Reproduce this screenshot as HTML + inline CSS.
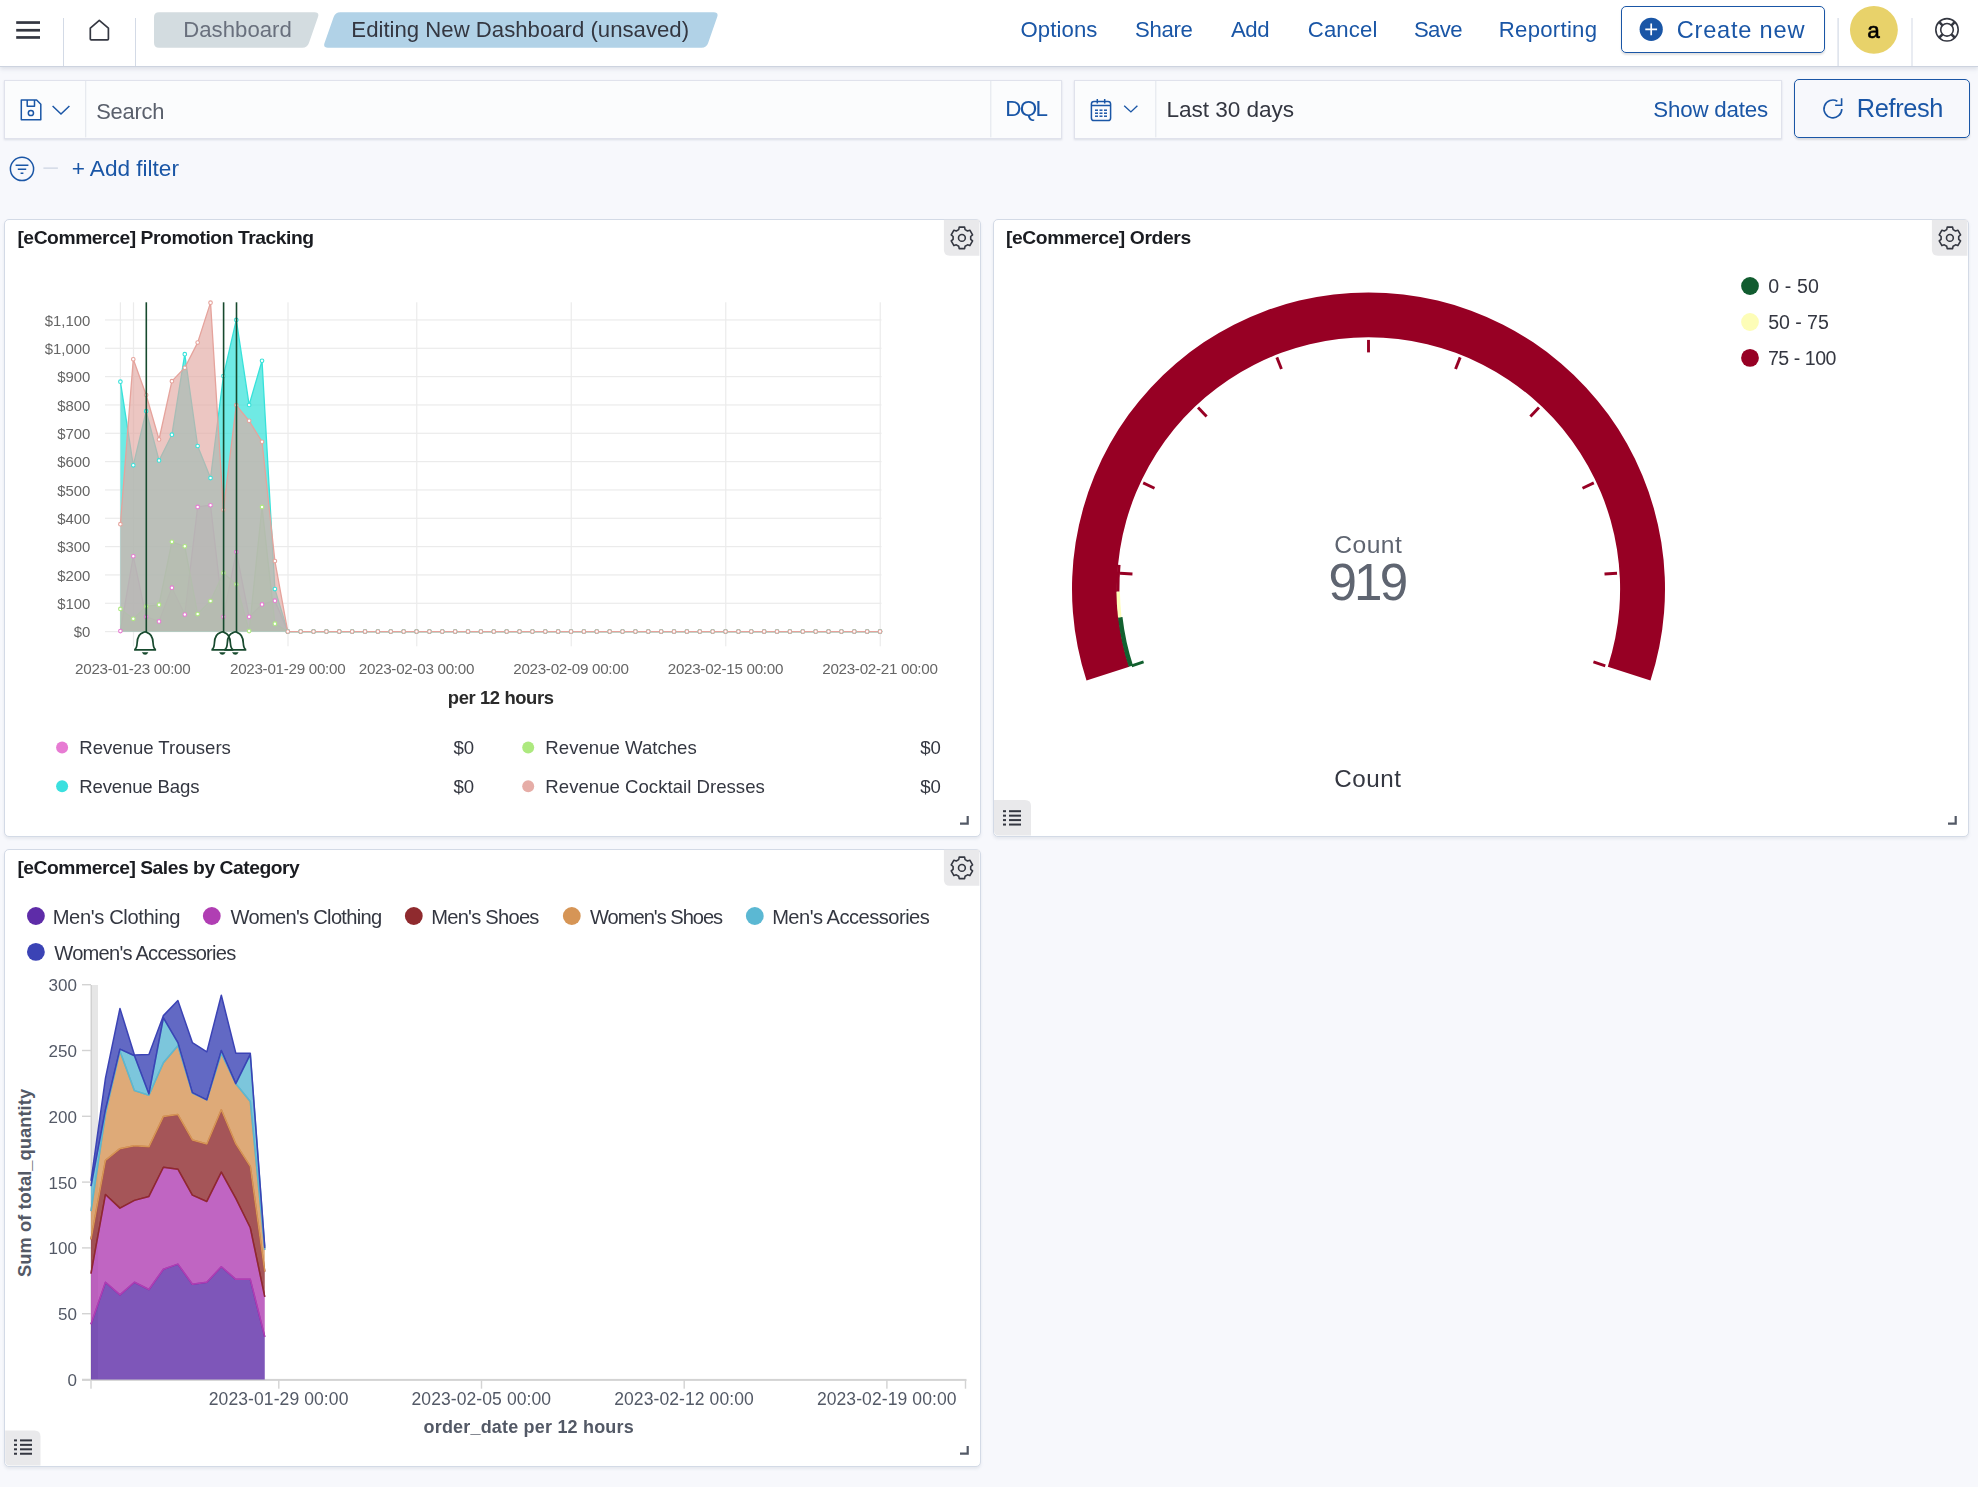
<!DOCTYPE html>
<html><head><meta charset="utf-8"><title>Dashboard</title>
<style>
html,body{margin:0;padding:0}
body{width:1978px;height:1487px;overflow:hidden;position:relative;background:#F7F8FC;font-family:"Liberation Sans", sans-serif}
.tx{position:absolute;left:0;top:0;width:1978px;height:1487px;will-change:transform}
.tx div{position:absolute;white-space:nowrap}
svg{position:absolute;left:0;top:0}
</style></head><body>
<div style="position:absolute;left:0;top:0;width:1978px;height:66px;background:#fff;border-bottom:1px solid #CDD3DF;box-shadow:0 2px 4px rgba(152,162,179,.28)"></div><div style="position:absolute;left:1621px;top:6.2px;width:202px;height:45.3px;border:1.2px solid #1A56A6;border-radius:5px;box-shadow:0 1.5px 2px rgba(0,0,0,.12)"></div><div style="position:absolute;left:4.2px;top:79.7px;width:1055.8px;height:57.4px;background:#FBFCFD;border:1px solid #E0E2EC;box-shadow:0 1px 2px rgba(152,162,179,.3)"></div><div style="position:absolute;left:1074.2px;top:79.7px;width:706.3px;height:57.4px;background:#FBFCFD;border:1px solid #E0E2EC;box-shadow:0 1px 2px rgba(152,162,179,.3)"></div><div style="position:absolute;left:1794.3px;top:79.2px;width:174.2px;height:57.2px;border:1.2px solid #1A56A6;border-radius:5px;box-shadow:0 1.5px 2px rgba(0,0,0,.12)"></div><div style="position:absolute;left:4.2px;top:219.3px;width:974.8px;height:616.2px;background:#fff;border:1px solid #D3DAE6;border-radius:5px;box-shadow:0 2px 3px rgba(152,162,179,.18)"></div><div style="position:absolute;left:993px;top:219.3px;width:974px;height:616.2px;background:#fff;border:1px solid #D3DAE6;border-radius:5px;box-shadow:0 2px 3px rgba(152,162,179,.18)"></div><div style="position:absolute;left:4.2px;top:849.3px;width:974.8px;height:616.2px;background:#fff;border:1px solid #D3DAE6;border-radius:5px;box-shadow:0 2px 3px rgba(152,162,179,.18)"></div><div style="position:absolute;left:15.6px;top:1276.8px;transform:rotate(-90deg);transform-origin:0 0;white-space:nowrap;font-family:Liberation Sans,sans-serif;font-weight:bold;font-size:18.3px;color:#535966;line-height:18.3px;letter-spacing:0.06px">Sum of total_quantity</div>
<svg width="1978" height="1487" viewBox="0 0 1978 1487">
<rect x="16.2" y="21.2" width="23.8" height="2.7" fill="#343741"/><rect x="16.2" y="28.9" width="23.8" height="2.7" fill="#343741"/><rect x="16.2" y="36.1" width="23.8" height="2.7" fill="#343741"/><rect x="63" y="18" width="1" height="48" fill="#D3DAE6"/><rect x="135" y="18" width="1" height="48" fill="#D3DAE6"/><rect x="1837.5" y="18" width="1.2" height="48" fill="#D3DAE6"/><rect x="1911.5" y="18" width="1" height="48" fill="#D3DAE6"/><path d="M90.3 28.2 L99.3 20.3 L108.4 28.2 L108.4 38.9 Q108.4 39.8 107.5 39.8 L91.2 39.8 Q90.3 39.8 90.3 38.9 Z" fill="none" stroke="#343741" stroke-width="1.7" stroke-linejoin="round"/><path d="M154.00 17.20 Q154.00 12.20 159.00 12.20 L314.60 12.20 Q319.60 12.20 317.97 16.93 L308.93 43.07 Q307.30 47.80 302.30 47.80 L159.00 47.80 Q154.00 47.80 154.00 42.80 Z" fill="#D3DCE0"/><path d="M333.66 16.92 Q335.30 12.20 340.30 12.20 L713.80 12.20 Q718.80 12.20 717.17 16.93 L708.13 43.07 Q706.50 47.80 701.50 47.80 L327.90 47.80 Q322.90 47.80 324.54 43.08 Z" fill="#B1D2E7"/><circle cx="1651.2" cy="29.3" r="11.6" fill="#1A56A6"/><path d="M1651.2 23.4 V35.2 M1645.3 29.3 H1657.1" stroke="#fff" stroke-width="1.7"/><circle cx="1873.9" cy="29.85" r="23.95" fill="#E8D26A"/><g fill="none" stroke="#343741"><circle cx="1947" cy="29.85" r="11.2" stroke-width="1.6"/><circle cx="1947" cy="29.85" r="6.3" stroke-width="1.6"/><path d="M1939.1 21.95 L1942.5 25.35 M1954.9 21.95 L1951.5 25.35 M1939.1 37.75 L1942.5 34.35 M1954.9 37.75 L1951.5 34.35" stroke-width="2.6"/></g><rect x="85.2" y="80.4" width="1" height="57" fill="#E1E5EC"/><rect x="990.3" y="80.4" width="1" height="57" fill="#E1E5EC"/><g fill="none" stroke="#1A56A6" stroke-width="1.5" stroke-linejoin="round"><path d="M21.3 100 H36.6 L40.8 104.3 V119.8 H21.3 Z"/><path d="M27.2 100 V106.3 H34.5 V100"/><circle cx="30.9" cy="113" r="2.6"/></g><path d="M52.6 106 L61 114 L69.4 106" fill="none" stroke="#1A56A6" stroke-width="1.5"/><rect x="1155.3" y="80.4" width="1" height="57" fill="#E1E5EC"/><g fill="none" stroke="#1A56A6" stroke-width="1.5"><rect x="1091.4" y="101.5" width="19.2" height="19" rx="2.6"/><path d="M1091.4 105.6 H1110.6 M1097.3 99 V103.6 M1104.7 99 V103.6"/></g><rect x="1095.0" y="109.45" width="3" height="1.5" fill="#1A56A6"/><rect x="1095.0" y="112.45" width="3" height="1.5" fill="#1A56A6"/><rect x="1095.0" y="115.45" width="3" height="1.5" fill="#1A56A6"/><rect x="1099.5" y="109.45" width="3" height="1.5" fill="#1A56A6"/><rect x="1099.5" y="112.45" width="3" height="1.5" fill="#1A56A6"/><rect x="1099.5" y="115.45" width="3" height="1.5" fill="#1A56A6"/><rect x="1104.0" y="109.45" width="3" height="1.5" fill="#1A56A6"/><rect x="1104.0" y="112.45" width="3" height="1.5" fill="#1A56A6"/><rect x="1104.0" y="115.45" width="3" height="1.5" fill="#1A56A6"/><path d="M1124.2 105.8 L1130.9 111.9 L1137.4 105.8" fill="none" stroke="#1A56A6" stroke-width="1.4"/><path d="M1841.8 108.9 A8.9 8.9 0 1 1 1837.35 101.2" fill="none" stroke="#1A56A6" stroke-width="1.6"/><path d="M1835.1 105.3 H1841.6 V98.3" fill="none" stroke="#1A56A6" stroke-width="1.6"/><g fill="none" stroke="#1A56A6" stroke-width="1.5"><circle cx="22" cy="168.9" r="11.6"/><path d="M15.6 165.3 H28.4 M17.8 169.3 H26.2 M20.6 173.2 H23.4"/></g><rect x="43.4" y="167.4" width="14.5" height="1.5" fill="#D3DAE6"/><path d="M943.9 219.70000000000002 H979.4 V255.70000000000002 H949.9 Q943.9 255.70000000000002 943.9 249.70000000000002 Z" fill="#E9E9EB"/><path d="M959.21 227.13 L964.59 227.13 L965.09 229.59 L967.50 230.98 L969.88 230.19 L972.57 234.84 L970.69 236.51 L970.69 239.29 L972.57 240.96 L969.88 245.61 L967.50 244.82 L965.09 246.21 L964.59 248.67 L959.21 248.67 L958.71 246.21 L956.30 244.82 L953.92 245.61 L951.23 240.96 L953.11 239.29 L953.11 236.51 L951.23 234.84 L953.92 230.19 L956.30 230.98 L958.71 229.59Z" fill="none" stroke="#343741" stroke-width="1.6" stroke-linejoin="round"/><circle cx="961.9" cy="237.9" r="3.4" fill="none" stroke="#343741" stroke-width="1.6"/><path d="M1931.9 219.70000000000002 H1967.4 V255.70000000000002 H1937.9 Q1931.9 255.70000000000002 1931.9 249.70000000000002 Z" fill="#E9E9EB"/><path d="M1947.21 227.13 L1952.59 227.13 L1953.09 229.59 L1955.50 230.98 L1957.88 230.19 L1960.57 234.84 L1958.69 236.51 L1958.69 239.29 L1960.57 240.96 L1957.88 245.61 L1955.50 244.82 L1953.09 246.21 L1952.59 248.67 L1947.21 248.67 L1946.71 246.21 L1944.30 244.82 L1941.92 245.61 L1939.23 240.96 L1941.11 239.29 L1941.11 236.51 L1939.23 234.84 L1941.92 230.19 L1944.30 230.98 L1946.71 229.59Z" fill="none" stroke="#343741" stroke-width="1.6" stroke-linejoin="round"/><circle cx="1949.9" cy="237.9" r="3.4" fill="none" stroke="#343741" stroke-width="1.6"/><path d="M943.9 849.6999999999999 H979.4 V885.6999999999999 H949.9 Q943.9 885.6999999999999 943.9 879.6999999999999 Z" fill="#E9E9EB"/><path d="M959.21 857.13 L964.59 857.13 L965.09 859.59 L967.50 860.98 L969.88 860.19 L972.57 864.84 L970.69 866.51 L970.69 869.29 L972.57 870.96 L969.88 875.61 L967.50 874.82 L965.09 876.21 L964.59 878.67 L959.21 878.67 L958.71 876.21 L956.30 874.82 L953.92 875.61 L951.23 870.96 L953.11 869.29 L953.11 866.51 L951.23 864.84 L953.92 860.19 L956.30 860.98 L958.71 859.59Z" fill="none" stroke="#343741" stroke-width="1.6" stroke-linejoin="round"/><circle cx="961.9" cy="867.9" r="3.4" fill="none" stroke="#343741" stroke-width="1.6"/><path d="M994 800 H1025 Q1031 800 1031 806 V835.5 H999 Q994 835.5 994 830.5 Z" fill="#E9E9EB"/><g fill="#343741"><rect x="1003" y="810.2" width="3" height="2"/><rect x="1009" y="810.2" width="12" height="2"/><rect x="1003" y="814.6500000000001" width="3" height="2"/><rect x="1009" y="814.6500000000001" width="12" height="2"/><rect x="1003" y="819.1" width="3" height="2"/><rect x="1009" y="819.1" width="12" height="2"/><rect x="1003" y="823.5500000000001" width="3" height="2"/><rect x="1009" y="823.5500000000001" width="12" height="2"/></g><path d="M5.2 1430.4 H34.5 Q40.5 1430.4 40.5 1436.4 V1465.5 H10.2 Q5.2 1465.5 5.2 1460.5 Z" fill="#E9E9EB"/><g fill="#343741"><rect x="14" y="1439.4" width="3" height="2"/><rect x="20" y="1439.4" width="12" height="2"/><rect x="14" y="1443.8500000000001" width="3" height="2"/><rect x="20" y="1443.8500000000001" width="12" height="2"/><rect x="14" y="1448.3000000000002" width="3" height="2"/><rect x="20" y="1448.3000000000002" width="12" height="2"/><rect x="14" y="1452.75" width="3" height="2"/><rect x="20" y="1452.75" width="12" height="2"/></g><path d="M960.0 823.6 H967.6999999999999 V815.9000000000001" fill="none" stroke="#535966" stroke-width="2.2"/><path d="M1948.0 823.6 H1955.7 V815.9000000000001" fill="none" stroke="#535966" stroke-width="2.2"/><path d="M960.0 1453.6000000000001 H967.6999999999999 V1445.9" fill="none" stroke="#535966" stroke-width="2.2"/><rect x="105" y="631.00" width="776.5" height="1.2" fill="#EBEBEB"/><rect x="105" y="602.67" width="776.5" height="1.2" fill="#EBEBEB"/><rect x="105" y="574.33" width="776.5" height="1.2" fill="#EBEBEB"/><rect x="105" y="546.00" width="776.5" height="1.2" fill="#EBEBEB"/><rect x="105" y="517.67" width="776.5" height="1.2" fill="#EBEBEB"/><rect x="105" y="489.34" width="776.5" height="1.2" fill="#EBEBEB"/><rect x="105" y="461.00" width="776.5" height="1.2" fill="#EBEBEB"/><rect x="105" y="432.67" width="776.5" height="1.2" fill="#EBEBEB"/><rect x="105" y="404.34" width="776.5" height="1.2" fill="#EBEBEB"/><rect x="105" y="376.00" width="776.5" height="1.2" fill="#EBEBEB"/><rect x="105" y="347.67" width="776.5" height="1.2" fill="#EBEBEB"/><rect x="105" y="319.34" width="776.5" height="1.2" fill="#EBEBEB"/><rect x="132.90" y="302.3" width="1.2" height="344" fill="#EBEBEB"/><rect x="287.40" y="302.3" width="1.2" height="344" fill="#EBEBEB"/><rect x="416.15" y="302.3" width="1.2" height="344" fill="#EBEBEB"/><rect x="570.65" y="302.3" width="1.2" height="344" fill="#EBEBEB"/><rect x="725.15" y="302.3" width="1.2" height="344" fill="#EBEBEB"/><rect x="879.65" y="302.3" width="1.2" height="344" fill="#EBEBEB"/><rect x="119.8" y="302.3" width="1.2" height="329.3" fill="#EBEBEB"/><path d="M120.40 631.03 L133.28 556.23 L146.15 616.87 L159.03 621.40 L171.90 587.68 L184.78 614.60 L197.65 506.93 L210.53 505.23 L223.40 616.87 L236.28 551.98 L249.15 616.87 L262.02 604.40 L274.90 600.72 L287.77 631.60 L300.65 631.60 L313.52 631.60 L326.40 631.60 L339.27 631.60 L352.15 631.60 L365.02 631.60 L377.90 631.60 L390.77 631.60 L403.65 631.60 L416.52 631.60 L429.40 631.60 L442.27 631.60 L455.15 631.60 L468.02 631.60 L480.90 631.60 L493.77 631.60 L506.65 631.60 L519.52 631.60 L532.40 631.60 L545.27 631.60 L558.15 631.60 L571.02 631.60 L583.90 631.60 L596.77 631.60 L609.65 631.60 L622.52 631.60 L635.40 631.60 L648.27 631.60 L661.15 631.60 L674.02 631.60 L686.90 631.60 L699.77 631.60 L712.65 631.60 L725.52 631.60 L738.40 631.60 L751.27 631.60 L764.15 631.60 L777.02 631.60 L789.90 631.60 L802.77 631.60 L815.65 631.60 L828.52 631.60 L841.40 631.60 L854.27 631.60 L867.15 631.60 L880.02 631.60 L880.02 631.6 L120.40 631.6 Z" fill="#E77BD3" fill-opacity="0.45"/><path d="M120.40 631.03 L133.28 556.23 L146.15 616.87 L159.03 621.40 L171.90 587.68 L184.78 614.60 L197.65 506.93 L210.53 505.23 L223.40 616.87 L236.28 551.98 L249.15 616.87 L262.02 604.40 L274.90 600.72 L287.77 631.60 L300.65 631.60 L313.52 631.60 L326.40 631.60 L339.27 631.60 L352.15 631.60 L365.02 631.60 L377.90 631.60 L390.77 631.60 L403.65 631.60 L416.52 631.60 L429.40 631.60 L442.27 631.60 L455.15 631.60 L468.02 631.60 L480.90 631.60 L493.77 631.60 L506.65 631.60 L519.52 631.60 L532.40 631.60 L545.27 631.60 L558.15 631.60 L571.02 631.60 L583.90 631.60 L596.77 631.60 L609.65 631.60 L622.52 631.60 L635.40 631.60 L648.27 631.60 L661.15 631.60 L674.02 631.60 L686.90 631.60 L699.77 631.60 L712.65 631.60 L725.52 631.60 L738.40 631.60 L751.27 631.60 L764.15 631.60 L777.02 631.60 L789.90 631.60 L802.77 631.60 L815.65 631.60 L828.52 631.60 L841.40 631.60 L854.27 631.60 L867.15 631.60 L880.02 631.60" fill="none" stroke="#E77BD3" stroke-width="1.3" stroke-linejoin="round"/><path d="M120.40 608.93 L133.28 618.85 L146.15 606.38 L159.03 604.68 L171.90 541.78 L184.78 546.32 L197.65 614.03 L210.53 601.00 L223.40 572.95 L236.28 584.28 L249.15 631.03 L262.02 506.93 L274.90 623.67 L287.77 631.60 L300.65 631.60 L313.52 631.60 L326.40 631.60 L339.27 631.60 L352.15 631.60 L365.02 631.60 L377.90 631.60 L390.77 631.60 L403.65 631.60 L416.52 631.60 L429.40 631.60 L442.27 631.60 L455.15 631.60 L468.02 631.60 L480.90 631.60 L493.77 631.60 L506.65 631.60 L519.52 631.60 L532.40 631.60 L545.27 631.60 L558.15 631.60 L571.02 631.60 L583.90 631.60 L596.77 631.60 L609.65 631.60 L622.52 631.60 L635.40 631.60 L648.27 631.60 L661.15 631.60 L674.02 631.60 L686.90 631.60 L699.77 631.60 L712.65 631.60 L725.52 631.60 L738.40 631.60 L751.27 631.60 L764.15 631.60 L777.02 631.60 L789.90 631.60 L802.77 631.60 L815.65 631.60 L828.52 631.60 L841.40 631.60 L854.27 631.60 L867.15 631.60 L880.02 631.60 L880.02 631.6 L120.40 631.6 Z" fill="#ADE97F" fill-opacity="0.55"/><path d="M120.40 608.93 L133.28 618.85 L146.15 606.38 L159.03 604.68 L171.90 541.78 L184.78 546.32 L197.65 614.03 L210.53 601.00 L223.40 572.95 L236.28 584.28 L249.15 631.03 L262.02 506.93 L274.90 623.67 L287.77 631.60 L300.65 631.60 L313.52 631.60 L326.40 631.60 L339.27 631.60 L352.15 631.60 L365.02 631.60 L377.90 631.60 L390.77 631.60 L403.65 631.60 L416.52 631.60 L429.40 631.60 L442.27 631.60 L455.15 631.60 L468.02 631.60 L480.90 631.60 L493.77 631.60 L506.65 631.60 L519.52 631.60 L532.40 631.60 L545.27 631.60 L558.15 631.60 L571.02 631.60 L583.90 631.60 L596.77 631.60 L609.65 631.60 L622.52 631.60 L635.40 631.60 L648.27 631.60 L661.15 631.60 L674.02 631.60 L686.90 631.60 L699.77 631.60 L712.65 631.60 L725.52 631.60 L738.40 631.60 L751.27 631.60 L764.15 631.60 L777.02 631.60 L789.90 631.60 L802.77 631.60 L815.65 631.60 L828.52 631.60 L841.40 631.60 L854.27 631.60 L867.15 631.60 L880.02 631.60" fill="none" stroke="#ADE97F" stroke-width="1.3" stroke-linejoin="round"/><path d="M120.40 381.70 L133.28 465.29 L146.15 411.17 L159.03 460.47 L171.90 434.69 L184.78 354.22 L197.65 446.02 L210.53 478.04 L223.40 376.04 L236.28 319.94 L249.15 404.94 L262.02 360.74 L274.90 589.10 L287.77 631.60 L300.65 631.60 L313.52 631.60 L326.40 631.60 L339.27 631.60 L352.15 631.60 L365.02 631.60 L377.90 631.60 L390.77 631.60 L403.65 631.60 L416.52 631.60 L429.40 631.60 L442.27 631.60 L455.15 631.60 L468.02 631.60 L480.90 631.60 L493.77 631.60 L506.65 631.60 L519.52 631.60 L532.40 631.60 L545.27 631.60 L558.15 631.60 L571.02 631.60 L583.90 631.60 L596.77 631.60 L609.65 631.60 L622.52 631.60 L635.40 631.60 L648.27 631.60 L661.15 631.60 L674.02 631.60 L686.90 631.60 L699.77 631.60 L712.65 631.60 L725.52 631.60 L738.40 631.60 L751.27 631.60 L764.15 631.60 L777.02 631.60 L789.90 631.60 L802.77 631.60 L815.65 631.60 L828.52 631.60 L841.40 631.60 L854.27 631.60 L867.15 631.60 L880.02 631.60 L880.02 631.6 L120.40 631.6 Z" fill="#38E2DA" fill-opacity="0.72"/><path d="M120.40 381.70 L133.28 465.29 L146.15 411.17 L159.03 460.47 L171.90 434.69 L184.78 354.22 L197.65 446.02 L210.53 478.04 L223.40 376.04 L236.28 319.94 L249.15 404.94 L262.02 360.74 L274.90 589.10 L287.77 631.60 L300.65 631.60 L313.52 631.60 L326.40 631.60 L339.27 631.60 L352.15 631.60 L365.02 631.60 L377.90 631.60 L390.77 631.60 L403.65 631.60 L416.52 631.60 L429.40 631.60 L442.27 631.60 L455.15 631.60 L468.02 631.60 L480.90 631.60 L493.77 631.60 L506.65 631.60 L519.52 631.60 L532.40 631.60 L545.27 631.60 L558.15 631.60 L571.02 631.60 L583.90 631.60 L596.77 631.60 L609.65 631.60 L622.52 631.60 L635.40 631.60 L648.27 631.60 L661.15 631.60 L674.02 631.60 L686.90 631.60 L699.77 631.60 L712.65 631.60 L725.52 631.60 L738.40 631.60 L751.27 631.60 L764.15 631.60 L777.02 631.60 L789.90 631.60 L802.77 631.60 L815.65 631.60 L828.52 631.60 L841.40 631.60 L854.27 631.60 L867.15 631.60 L880.02 631.60" fill="none" stroke="#38E2DA" stroke-width="1.3" stroke-linejoin="round"/><path d="M120.40 524.22 L133.28 359.32 L146.15 395.02 L159.03 439.50 L171.90 381.14 L184.78 367.82 L197.65 342.60 L210.53 302.65 L223.40 509.77 L236.28 405.22 L249.15 420.80 L262.02 441.77 L274.90 561.05 L287.77 631.60 L300.65 631.60 L313.52 631.60 L326.40 631.60 L339.27 631.60 L352.15 631.60 L365.02 631.60 L377.90 631.60 L390.77 631.60 L403.65 631.60 L416.52 631.60 L429.40 631.60 L442.27 631.60 L455.15 631.60 L468.02 631.60 L480.90 631.60 L493.77 631.60 L506.65 631.60 L519.52 631.60 L532.40 631.60 L545.27 631.60 L558.15 631.60 L571.02 631.60 L583.90 631.60 L596.77 631.60 L609.65 631.60 L622.52 631.60 L635.40 631.60 L648.27 631.60 L661.15 631.60 L674.02 631.60 L686.90 631.60 L699.77 631.60 L712.65 631.60 L725.52 631.60 L738.40 631.60 L751.27 631.60 L764.15 631.60 L777.02 631.60 L789.90 631.60 L802.77 631.60 L815.65 631.60 L828.52 631.60 L841.40 631.60 L854.27 631.60 L867.15 631.60 L880.02 631.60 L880.02 631.6 L120.40 631.6 Z" fill="#E2A8A3" fill-opacity="0.66"/><path d="M120.40 524.22 L133.28 359.32 L146.15 395.02 L159.03 439.50 L171.90 381.14 L184.78 367.82 L197.65 342.60 L210.53 302.65 L223.40 509.77 L236.28 405.22 L249.15 420.80 L262.02 441.77 L274.90 561.05 L287.77 631.60 L300.65 631.60 L313.52 631.60 L326.40 631.60 L339.27 631.60 L352.15 631.60 L365.02 631.60 L377.90 631.60 L390.77 631.60 L403.65 631.60 L416.52 631.60 L429.40 631.60 L442.27 631.60 L455.15 631.60 L468.02 631.60 L480.90 631.60 L493.77 631.60 L506.65 631.60 L519.52 631.60 L532.40 631.60 L545.27 631.60 L558.15 631.60 L571.02 631.60 L583.90 631.60 L596.77 631.60 L609.65 631.60 L622.52 631.60 L635.40 631.60 L648.27 631.60 L661.15 631.60 L674.02 631.60 L686.90 631.60 L699.77 631.60 L712.65 631.60 L725.52 631.60 L738.40 631.60 L751.27 631.60 L764.15 631.60 L777.02 631.60 L789.90 631.60 L802.77 631.60 L815.65 631.60 L828.52 631.60 L841.40 631.60 L854.27 631.60 L867.15 631.60 L880.02 631.60" fill="none" stroke="#E5A39C" stroke-width="1.3" stroke-linejoin="round"/><circle cx="120.40" cy="631.03" r="1.8" fill="#fff" stroke="#E77BD3" stroke-width="1.1"/><circle cx="133.28" cy="556.23" r="1.8" fill="#fff" stroke="#E77BD3" stroke-width="1.1"/><circle cx="146.15" cy="616.87" r="1.8" fill="#fff" stroke="#E77BD3" stroke-width="1.1"/><circle cx="159.03" cy="621.40" r="1.8" fill="#fff" stroke="#E77BD3" stroke-width="1.1"/><circle cx="171.90" cy="587.68" r="1.8" fill="#fff" stroke="#E77BD3" stroke-width="1.1"/><circle cx="184.78" cy="614.60" r="1.8" fill="#fff" stroke="#E77BD3" stroke-width="1.1"/><circle cx="197.65" cy="506.93" r="1.8" fill="#fff" stroke="#E77BD3" stroke-width="1.1"/><circle cx="210.53" cy="505.23" r="1.8" fill="#fff" stroke="#E77BD3" stroke-width="1.1"/><circle cx="223.40" cy="616.87" r="1.8" fill="#fff" stroke="#E77BD3" stroke-width="1.1"/><circle cx="236.28" cy="551.98" r="1.8" fill="#fff" stroke="#E77BD3" stroke-width="1.1"/><circle cx="249.15" cy="616.87" r="1.8" fill="#fff" stroke="#E77BD3" stroke-width="1.1"/><circle cx="262.02" cy="604.40" r="1.8" fill="#fff" stroke="#E77BD3" stroke-width="1.1"/><circle cx="274.90" cy="600.72" r="1.8" fill="#fff" stroke="#E77BD3" stroke-width="1.1"/><circle cx="287.77" cy="631.60" r="1.8" fill="#fff" stroke="#E77BD3" stroke-width="1.1"/><circle cx="300.65" cy="631.60" r="1.8" fill="#fff" stroke="#E77BD3" stroke-width="1.1"/><circle cx="313.52" cy="631.60" r="1.8" fill="#fff" stroke="#E77BD3" stroke-width="1.1"/><circle cx="326.40" cy="631.60" r="1.8" fill="#fff" stroke="#E77BD3" stroke-width="1.1"/><circle cx="339.27" cy="631.60" r="1.8" fill="#fff" stroke="#E77BD3" stroke-width="1.1"/><circle cx="352.15" cy="631.60" r="1.8" fill="#fff" stroke="#E77BD3" stroke-width="1.1"/><circle cx="365.02" cy="631.60" r="1.8" fill="#fff" stroke="#E77BD3" stroke-width="1.1"/><circle cx="377.90" cy="631.60" r="1.8" fill="#fff" stroke="#E77BD3" stroke-width="1.1"/><circle cx="390.77" cy="631.60" r="1.8" fill="#fff" stroke="#E77BD3" stroke-width="1.1"/><circle cx="403.65" cy="631.60" r="1.8" fill="#fff" stroke="#E77BD3" stroke-width="1.1"/><circle cx="416.52" cy="631.60" r="1.8" fill="#fff" stroke="#E77BD3" stroke-width="1.1"/><circle cx="429.40" cy="631.60" r="1.8" fill="#fff" stroke="#E77BD3" stroke-width="1.1"/><circle cx="442.27" cy="631.60" r="1.8" fill="#fff" stroke="#E77BD3" stroke-width="1.1"/><circle cx="455.15" cy="631.60" r="1.8" fill="#fff" stroke="#E77BD3" stroke-width="1.1"/><circle cx="468.02" cy="631.60" r="1.8" fill="#fff" stroke="#E77BD3" stroke-width="1.1"/><circle cx="480.90" cy="631.60" r="1.8" fill="#fff" stroke="#E77BD3" stroke-width="1.1"/><circle cx="493.77" cy="631.60" r="1.8" fill="#fff" stroke="#E77BD3" stroke-width="1.1"/><circle cx="506.65" cy="631.60" r="1.8" fill="#fff" stroke="#E77BD3" stroke-width="1.1"/><circle cx="519.52" cy="631.60" r="1.8" fill="#fff" stroke="#E77BD3" stroke-width="1.1"/><circle cx="532.40" cy="631.60" r="1.8" fill="#fff" stroke="#E77BD3" stroke-width="1.1"/><circle cx="545.27" cy="631.60" r="1.8" fill="#fff" stroke="#E77BD3" stroke-width="1.1"/><circle cx="558.15" cy="631.60" r="1.8" fill="#fff" stroke="#E77BD3" stroke-width="1.1"/><circle cx="571.02" cy="631.60" r="1.8" fill="#fff" stroke="#E77BD3" stroke-width="1.1"/><circle cx="583.90" cy="631.60" r="1.8" fill="#fff" stroke="#E77BD3" stroke-width="1.1"/><circle cx="596.77" cy="631.60" r="1.8" fill="#fff" stroke="#E77BD3" stroke-width="1.1"/><circle cx="609.65" cy="631.60" r="1.8" fill="#fff" stroke="#E77BD3" stroke-width="1.1"/><circle cx="622.52" cy="631.60" r="1.8" fill="#fff" stroke="#E77BD3" stroke-width="1.1"/><circle cx="635.40" cy="631.60" r="1.8" fill="#fff" stroke="#E77BD3" stroke-width="1.1"/><circle cx="648.27" cy="631.60" r="1.8" fill="#fff" stroke="#E77BD3" stroke-width="1.1"/><circle cx="661.15" cy="631.60" r="1.8" fill="#fff" stroke="#E77BD3" stroke-width="1.1"/><circle cx="674.02" cy="631.60" r="1.8" fill="#fff" stroke="#E77BD3" stroke-width="1.1"/><circle cx="686.90" cy="631.60" r="1.8" fill="#fff" stroke="#E77BD3" stroke-width="1.1"/><circle cx="699.77" cy="631.60" r="1.8" fill="#fff" stroke="#E77BD3" stroke-width="1.1"/><circle cx="712.65" cy="631.60" r="1.8" fill="#fff" stroke="#E77BD3" stroke-width="1.1"/><circle cx="725.52" cy="631.60" r="1.8" fill="#fff" stroke="#E77BD3" stroke-width="1.1"/><circle cx="738.40" cy="631.60" r="1.8" fill="#fff" stroke="#E77BD3" stroke-width="1.1"/><circle cx="751.27" cy="631.60" r="1.8" fill="#fff" stroke="#E77BD3" stroke-width="1.1"/><circle cx="764.15" cy="631.60" r="1.8" fill="#fff" stroke="#E77BD3" stroke-width="1.1"/><circle cx="777.02" cy="631.60" r="1.8" fill="#fff" stroke="#E77BD3" stroke-width="1.1"/><circle cx="789.90" cy="631.60" r="1.8" fill="#fff" stroke="#E77BD3" stroke-width="1.1"/><circle cx="802.77" cy="631.60" r="1.8" fill="#fff" stroke="#E77BD3" stroke-width="1.1"/><circle cx="815.65" cy="631.60" r="1.8" fill="#fff" stroke="#E77BD3" stroke-width="1.1"/><circle cx="828.52" cy="631.60" r="1.8" fill="#fff" stroke="#E77BD3" stroke-width="1.1"/><circle cx="841.40" cy="631.60" r="1.8" fill="#fff" stroke="#E77BD3" stroke-width="1.1"/><circle cx="854.27" cy="631.60" r="1.8" fill="#fff" stroke="#E77BD3" stroke-width="1.1"/><circle cx="867.15" cy="631.60" r="1.8" fill="#fff" stroke="#E77BD3" stroke-width="1.1"/><circle cx="880.02" cy="631.60" r="1.8" fill="#fff" stroke="#E77BD3" stroke-width="1.1"/><circle cx="120.40" cy="608.93" r="1.8" fill="#fff" stroke="#ADE97F" stroke-width="1.1"/><circle cx="133.28" cy="618.85" r="1.8" fill="#fff" stroke="#ADE97F" stroke-width="1.1"/><circle cx="146.15" cy="606.38" r="1.8" fill="#fff" stroke="#ADE97F" stroke-width="1.1"/><circle cx="159.03" cy="604.68" r="1.8" fill="#fff" stroke="#ADE97F" stroke-width="1.1"/><circle cx="171.90" cy="541.78" r="1.8" fill="#fff" stroke="#ADE97F" stroke-width="1.1"/><circle cx="184.78" cy="546.32" r="1.8" fill="#fff" stroke="#ADE97F" stroke-width="1.1"/><circle cx="197.65" cy="614.03" r="1.8" fill="#fff" stroke="#ADE97F" stroke-width="1.1"/><circle cx="210.53" cy="601.00" r="1.8" fill="#fff" stroke="#ADE97F" stroke-width="1.1"/><circle cx="223.40" cy="572.95" r="1.8" fill="#fff" stroke="#ADE97F" stroke-width="1.1"/><circle cx="236.28" cy="584.28" r="1.8" fill="#fff" stroke="#ADE97F" stroke-width="1.1"/><circle cx="249.15" cy="631.03" r="1.8" fill="#fff" stroke="#ADE97F" stroke-width="1.1"/><circle cx="262.02" cy="506.93" r="1.8" fill="#fff" stroke="#ADE97F" stroke-width="1.1"/><circle cx="274.90" cy="623.67" r="1.8" fill="#fff" stroke="#ADE97F" stroke-width="1.1"/><circle cx="287.77" cy="631.60" r="1.8" fill="#fff" stroke="#ADE97F" stroke-width="1.1"/><circle cx="300.65" cy="631.60" r="1.8" fill="#fff" stroke="#ADE97F" stroke-width="1.1"/><circle cx="313.52" cy="631.60" r="1.8" fill="#fff" stroke="#ADE97F" stroke-width="1.1"/><circle cx="326.40" cy="631.60" r="1.8" fill="#fff" stroke="#ADE97F" stroke-width="1.1"/><circle cx="339.27" cy="631.60" r="1.8" fill="#fff" stroke="#ADE97F" stroke-width="1.1"/><circle cx="352.15" cy="631.60" r="1.8" fill="#fff" stroke="#ADE97F" stroke-width="1.1"/><circle cx="365.02" cy="631.60" r="1.8" fill="#fff" stroke="#ADE97F" stroke-width="1.1"/><circle cx="377.90" cy="631.60" r="1.8" fill="#fff" stroke="#ADE97F" stroke-width="1.1"/><circle cx="390.77" cy="631.60" r="1.8" fill="#fff" stroke="#ADE97F" stroke-width="1.1"/><circle cx="403.65" cy="631.60" r="1.8" fill="#fff" stroke="#ADE97F" stroke-width="1.1"/><circle cx="416.52" cy="631.60" r="1.8" fill="#fff" stroke="#ADE97F" stroke-width="1.1"/><circle cx="429.40" cy="631.60" r="1.8" fill="#fff" stroke="#ADE97F" stroke-width="1.1"/><circle cx="442.27" cy="631.60" r="1.8" fill="#fff" stroke="#ADE97F" stroke-width="1.1"/><circle cx="455.15" cy="631.60" r="1.8" fill="#fff" stroke="#ADE97F" stroke-width="1.1"/><circle cx="468.02" cy="631.60" r="1.8" fill="#fff" stroke="#ADE97F" stroke-width="1.1"/><circle cx="480.90" cy="631.60" r="1.8" fill="#fff" stroke="#ADE97F" stroke-width="1.1"/><circle cx="493.77" cy="631.60" r="1.8" fill="#fff" stroke="#ADE97F" stroke-width="1.1"/><circle cx="506.65" cy="631.60" r="1.8" fill="#fff" stroke="#ADE97F" stroke-width="1.1"/><circle cx="519.52" cy="631.60" r="1.8" fill="#fff" stroke="#ADE97F" stroke-width="1.1"/><circle cx="532.40" cy="631.60" r="1.8" fill="#fff" stroke="#ADE97F" stroke-width="1.1"/><circle cx="545.27" cy="631.60" r="1.8" fill="#fff" stroke="#ADE97F" stroke-width="1.1"/><circle cx="558.15" cy="631.60" r="1.8" fill="#fff" stroke="#ADE97F" stroke-width="1.1"/><circle cx="571.02" cy="631.60" r="1.8" fill="#fff" stroke="#ADE97F" stroke-width="1.1"/><circle cx="583.90" cy="631.60" r="1.8" fill="#fff" stroke="#ADE97F" stroke-width="1.1"/><circle cx="596.77" cy="631.60" r="1.8" fill="#fff" stroke="#ADE97F" stroke-width="1.1"/><circle cx="609.65" cy="631.60" r="1.8" fill="#fff" stroke="#ADE97F" stroke-width="1.1"/><circle cx="622.52" cy="631.60" r="1.8" fill="#fff" stroke="#ADE97F" stroke-width="1.1"/><circle cx="635.40" cy="631.60" r="1.8" fill="#fff" stroke="#ADE97F" stroke-width="1.1"/><circle cx="648.27" cy="631.60" r="1.8" fill="#fff" stroke="#ADE97F" stroke-width="1.1"/><circle cx="661.15" cy="631.60" r="1.8" fill="#fff" stroke="#ADE97F" stroke-width="1.1"/><circle cx="674.02" cy="631.60" r="1.8" fill="#fff" stroke="#ADE97F" stroke-width="1.1"/><circle cx="686.90" cy="631.60" r="1.8" fill="#fff" stroke="#ADE97F" stroke-width="1.1"/><circle cx="699.77" cy="631.60" r="1.8" fill="#fff" stroke="#ADE97F" stroke-width="1.1"/><circle cx="712.65" cy="631.60" r="1.8" fill="#fff" stroke="#ADE97F" stroke-width="1.1"/><circle cx="725.52" cy="631.60" r="1.8" fill="#fff" stroke="#ADE97F" stroke-width="1.1"/><circle cx="738.40" cy="631.60" r="1.8" fill="#fff" stroke="#ADE97F" stroke-width="1.1"/><circle cx="751.27" cy="631.60" r="1.8" fill="#fff" stroke="#ADE97F" stroke-width="1.1"/><circle cx="764.15" cy="631.60" r="1.8" fill="#fff" stroke="#ADE97F" stroke-width="1.1"/><circle cx="777.02" cy="631.60" r="1.8" fill="#fff" stroke="#ADE97F" stroke-width="1.1"/><circle cx="789.90" cy="631.60" r="1.8" fill="#fff" stroke="#ADE97F" stroke-width="1.1"/><circle cx="802.77" cy="631.60" r="1.8" fill="#fff" stroke="#ADE97F" stroke-width="1.1"/><circle cx="815.65" cy="631.60" r="1.8" fill="#fff" stroke="#ADE97F" stroke-width="1.1"/><circle cx="828.52" cy="631.60" r="1.8" fill="#fff" stroke="#ADE97F" stroke-width="1.1"/><circle cx="841.40" cy="631.60" r="1.8" fill="#fff" stroke="#ADE97F" stroke-width="1.1"/><circle cx="854.27" cy="631.60" r="1.8" fill="#fff" stroke="#ADE97F" stroke-width="1.1"/><circle cx="867.15" cy="631.60" r="1.8" fill="#fff" stroke="#ADE97F" stroke-width="1.1"/><circle cx="880.02" cy="631.60" r="1.8" fill="#fff" stroke="#ADE97F" stroke-width="1.1"/><circle cx="120.40" cy="381.70" r="1.8" fill="#fff" stroke="#38E2DA" stroke-width="1.1"/><circle cx="133.28" cy="465.29" r="1.8" fill="#fff" stroke="#38E2DA" stroke-width="1.1"/><circle cx="146.15" cy="411.17" r="1.8" fill="#fff" stroke="#38E2DA" stroke-width="1.1"/><circle cx="159.03" cy="460.47" r="1.8" fill="#fff" stroke="#38E2DA" stroke-width="1.1"/><circle cx="171.90" cy="434.69" r="1.8" fill="#fff" stroke="#38E2DA" stroke-width="1.1"/><circle cx="184.78" cy="354.22" r="1.8" fill="#fff" stroke="#38E2DA" stroke-width="1.1"/><circle cx="197.65" cy="446.02" r="1.8" fill="#fff" stroke="#38E2DA" stroke-width="1.1"/><circle cx="210.53" cy="478.04" r="1.8" fill="#fff" stroke="#38E2DA" stroke-width="1.1"/><circle cx="223.40" cy="376.04" r="1.8" fill="#fff" stroke="#38E2DA" stroke-width="1.1"/><circle cx="236.28" cy="319.94" r="1.8" fill="#fff" stroke="#38E2DA" stroke-width="1.1"/><circle cx="249.15" cy="404.94" r="1.8" fill="#fff" stroke="#38E2DA" stroke-width="1.1"/><circle cx="262.02" cy="360.74" r="1.8" fill="#fff" stroke="#38E2DA" stroke-width="1.1"/><circle cx="274.90" cy="589.10" r="1.8" fill="#fff" stroke="#38E2DA" stroke-width="1.1"/><circle cx="287.77" cy="631.60" r="1.8" fill="#fff" stroke="#38E2DA" stroke-width="1.1"/><circle cx="300.65" cy="631.60" r="1.8" fill="#fff" stroke="#38E2DA" stroke-width="1.1"/><circle cx="313.52" cy="631.60" r="1.8" fill="#fff" stroke="#38E2DA" stroke-width="1.1"/><circle cx="326.40" cy="631.60" r="1.8" fill="#fff" stroke="#38E2DA" stroke-width="1.1"/><circle cx="339.27" cy="631.60" r="1.8" fill="#fff" stroke="#38E2DA" stroke-width="1.1"/><circle cx="352.15" cy="631.60" r="1.8" fill="#fff" stroke="#38E2DA" stroke-width="1.1"/><circle cx="365.02" cy="631.60" r="1.8" fill="#fff" stroke="#38E2DA" stroke-width="1.1"/><circle cx="377.90" cy="631.60" r="1.8" fill="#fff" stroke="#38E2DA" stroke-width="1.1"/><circle cx="390.77" cy="631.60" r="1.8" fill="#fff" stroke="#38E2DA" stroke-width="1.1"/><circle cx="403.65" cy="631.60" r="1.8" fill="#fff" stroke="#38E2DA" stroke-width="1.1"/><circle cx="416.52" cy="631.60" r="1.8" fill="#fff" stroke="#38E2DA" stroke-width="1.1"/><circle cx="429.40" cy="631.60" r="1.8" fill="#fff" stroke="#38E2DA" stroke-width="1.1"/><circle cx="442.27" cy="631.60" r="1.8" fill="#fff" stroke="#38E2DA" stroke-width="1.1"/><circle cx="455.15" cy="631.60" r="1.8" fill="#fff" stroke="#38E2DA" stroke-width="1.1"/><circle cx="468.02" cy="631.60" r="1.8" fill="#fff" stroke="#38E2DA" stroke-width="1.1"/><circle cx="480.90" cy="631.60" r="1.8" fill="#fff" stroke="#38E2DA" stroke-width="1.1"/><circle cx="493.77" cy="631.60" r="1.8" fill="#fff" stroke="#38E2DA" stroke-width="1.1"/><circle cx="506.65" cy="631.60" r="1.8" fill="#fff" stroke="#38E2DA" stroke-width="1.1"/><circle cx="519.52" cy="631.60" r="1.8" fill="#fff" stroke="#38E2DA" stroke-width="1.1"/><circle cx="532.40" cy="631.60" r="1.8" fill="#fff" stroke="#38E2DA" stroke-width="1.1"/><circle cx="545.27" cy="631.60" r="1.8" fill="#fff" stroke="#38E2DA" stroke-width="1.1"/><circle cx="558.15" cy="631.60" r="1.8" fill="#fff" stroke="#38E2DA" stroke-width="1.1"/><circle cx="571.02" cy="631.60" r="1.8" fill="#fff" stroke="#38E2DA" stroke-width="1.1"/><circle cx="583.90" cy="631.60" r="1.8" fill="#fff" stroke="#38E2DA" stroke-width="1.1"/><circle cx="596.77" cy="631.60" r="1.8" fill="#fff" stroke="#38E2DA" stroke-width="1.1"/><circle cx="609.65" cy="631.60" r="1.8" fill="#fff" stroke="#38E2DA" stroke-width="1.1"/><circle cx="622.52" cy="631.60" r="1.8" fill="#fff" stroke="#38E2DA" stroke-width="1.1"/><circle cx="635.40" cy="631.60" r="1.8" fill="#fff" stroke="#38E2DA" stroke-width="1.1"/><circle cx="648.27" cy="631.60" r="1.8" fill="#fff" stroke="#38E2DA" stroke-width="1.1"/><circle cx="661.15" cy="631.60" r="1.8" fill="#fff" stroke="#38E2DA" stroke-width="1.1"/><circle cx="674.02" cy="631.60" r="1.8" fill="#fff" stroke="#38E2DA" stroke-width="1.1"/><circle cx="686.90" cy="631.60" r="1.8" fill="#fff" stroke="#38E2DA" stroke-width="1.1"/><circle cx="699.77" cy="631.60" r="1.8" fill="#fff" stroke="#38E2DA" stroke-width="1.1"/><circle cx="712.65" cy="631.60" r="1.8" fill="#fff" stroke="#38E2DA" stroke-width="1.1"/><circle cx="725.52" cy="631.60" r="1.8" fill="#fff" stroke="#38E2DA" stroke-width="1.1"/><circle cx="738.40" cy="631.60" r="1.8" fill="#fff" stroke="#38E2DA" stroke-width="1.1"/><circle cx="751.27" cy="631.60" r="1.8" fill="#fff" stroke="#38E2DA" stroke-width="1.1"/><circle cx="764.15" cy="631.60" r="1.8" fill="#fff" stroke="#38E2DA" stroke-width="1.1"/><circle cx="777.02" cy="631.60" r="1.8" fill="#fff" stroke="#38E2DA" stroke-width="1.1"/><circle cx="789.90" cy="631.60" r="1.8" fill="#fff" stroke="#38E2DA" stroke-width="1.1"/><circle cx="802.77" cy="631.60" r="1.8" fill="#fff" stroke="#38E2DA" stroke-width="1.1"/><circle cx="815.65" cy="631.60" r="1.8" fill="#fff" stroke="#38E2DA" stroke-width="1.1"/><circle cx="828.52" cy="631.60" r="1.8" fill="#fff" stroke="#38E2DA" stroke-width="1.1"/><circle cx="841.40" cy="631.60" r="1.8" fill="#fff" stroke="#38E2DA" stroke-width="1.1"/><circle cx="854.27" cy="631.60" r="1.8" fill="#fff" stroke="#38E2DA" stroke-width="1.1"/><circle cx="867.15" cy="631.60" r="1.8" fill="#fff" stroke="#38E2DA" stroke-width="1.1"/><circle cx="880.02" cy="631.60" r="1.8" fill="#fff" stroke="#38E2DA" stroke-width="1.1"/><circle cx="120.40" cy="524.22" r="1.8" fill="#fff" stroke="#E5A39C" stroke-width="1.1"/><circle cx="133.28" cy="359.32" r="1.8" fill="#fff" stroke="#E5A39C" stroke-width="1.1"/><circle cx="146.15" cy="395.02" r="1.8" fill="#fff" stroke="#E5A39C" stroke-width="1.1"/><circle cx="159.03" cy="439.50" r="1.8" fill="#fff" stroke="#E5A39C" stroke-width="1.1"/><circle cx="171.90" cy="381.14" r="1.8" fill="#fff" stroke="#E5A39C" stroke-width="1.1"/><circle cx="184.78" cy="367.82" r="1.8" fill="#fff" stroke="#E5A39C" stroke-width="1.1"/><circle cx="197.65" cy="342.60" r="1.8" fill="#fff" stroke="#E5A39C" stroke-width="1.1"/><circle cx="210.53" cy="302.65" r="1.8" fill="#fff" stroke="#E5A39C" stroke-width="1.1"/><circle cx="223.40" cy="509.77" r="1.8" fill="#fff" stroke="#E5A39C" stroke-width="1.1"/><circle cx="236.28" cy="405.22" r="1.8" fill="#fff" stroke="#E5A39C" stroke-width="1.1"/><circle cx="249.15" cy="420.80" r="1.8" fill="#fff" stroke="#E5A39C" stroke-width="1.1"/><circle cx="262.02" cy="441.77" r="1.8" fill="#fff" stroke="#E5A39C" stroke-width="1.1"/><circle cx="274.90" cy="561.05" r="1.8" fill="#fff" stroke="#E5A39C" stroke-width="1.1"/><circle cx="287.77" cy="631.60" r="1.8" fill="#fff" stroke="#E5A39C" stroke-width="1.1"/><circle cx="300.65" cy="631.60" r="1.8" fill="#fff" stroke="#E5A39C" stroke-width="1.1"/><circle cx="313.52" cy="631.60" r="1.8" fill="#fff" stroke="#E5A39C" stroke-width="1.1"/><circle cx="326.40" cy="631.60" r="1.8" fill="#fff" stroke="#E5A39C" stroke-width="1.1"/><circle cx="339.27" cy="631.60" r="1.8" fill="#fff" stroke="#E5A39C" stroke-width="1.1"/><circle cx="352.15" cy="631.60" r="1.8" fill="#fff" stroke="#E5A39C" stroke-width="1.1"/><circle cx="365.02" cy="631.60" r="1.8" fill="#fff" stroke="#E5A39C" stroke-width="1.1"/><circle cx="377.90" cy="631.60" r="1.8" fill="#fff" stroke="#E5A39C" stroke-width="1.1"/><circle cx="390.77" cy="631.60" r="1.8" fill="#fff" stroke="#E5A39C" stroke-width="1.1"/><circle cx="403.65" cy="631.60" r="1.8" fill="#fff" stroke="#E5A39C" stroke-width="1.1"/><circle cx="416.52" cy="631.60" r="1.8" fill="#fff" stroke="#E5A39C" stroke-width="1.1"/><circle cx="429.40" cy="631.60" r="1.8" fill="#fff" stroke="#E5A39C" stroke-width="1.1"/><circle cx="442.27" cy="631.60" r="1.8" fill="#fff" stroke="#E5A39C" stroke-width="1.1"/><circle cx="455.15" cy="631.60" r="1.8" fill="#fff" stroke="#E5A39C" stroke-width="1.1"/><circle cx="468.02" cy="631.60" r="1.8" fill="#fff" stroke="#E5A39C" stroke-width="1.1"/><circle cx="480.90" cy="631.60" r="1.8" fill="#fff" stroke="#E5A39C" stroke-width="1.1"/><circle cx="493.77" cy="631.60" r="1.8" fill="#fff" stroke="#E5A39C" stroke-width="1.1"/><circle cx="506.65" cy="631.60" r="1.8" fill="#fff" stroke="#E5A39C" stroke-width="1.1"/><circle cx="519.52" cy="631.60" r="1.8" fill="#fff" stroke="#E5A39C" stroke-width="1.1"/><circle cx="532.40" cy="631.60" r="1.8" fill="#fff" stroke="#E5A39C" stroke-width="1.1"/><circle cx="545.27" cy="631.60" r="1.8" fill="#fff" stroke="#E5A39C" stroke-width="1.1"/><circle cx="558.15" cy="631.60" r="1.8" fill="#fff" stroke="#E5A39C" stroke-width="1.1"/><circle cx="571.02" cy="631.60" r="1.8" fill="#fff" stroke="#E5A39C" stroke-width="1.1"/><circle cx="583.90" cy="631.60" r="1.8" fill="#fff" stroke="#E5A39C" stroke-width="1.1"/><circle cx="596.77" cy="631.60" r="1.8" fill="#fff" stroke="#E5A39C" stroke-width="1.1"/><circle cx="609.65" cy="631.60" r="1.8" fill="#fff" stroke="#E5A39C" stroke-width="1.1"/><circle cx="622.52" cy="631.60" r="1.8" fill="#fff" stroke="#E5A39C" stroke-width="1.1"/><circle cx="635.40" cy="631.60" r="1.8" fill="#fff" stroke="#E5A39C" stroke-width="1.1"/><circle cx="648.27" cy="631.60" r="1.8" fill="#fff" stroke="#E5A39C" stroke-width="1.1"/><circle cx="661.15" cy="631.60" r="1.8" fill="#fff" stroke="#E5A39C" stroke-width="1.1"/><circle cx="674.02" cy="631.60" r="1.8" fill="#fff" stroke="#E5A39C" stroke-width="1.1"/><circle cx="686.90" cy="631.60" r="1.8" fill="#fff" stroke="#E5A39C" stroke-width="1.1"/><circle cx="699.77" cy="631.60" r="1.8" fill="#fff" stroke="#E5A39C" stroke-width="1.1"/><circle cx="712.65" cy="631.60" r="1.8" fill="#fff" stroke="#E5A39C" stroke-width="1.1"/><circle cx="725.52" cy="631.60" r="1.8" fill="#fff" stroke="#E5A39C" stroke-width="1.1"/><circle cx="738.40" cy="631.60" r="1.8" fill="#fff" stroke="#E5A39C" stroke-width="1.1"/><circle cx="751.27" cy="631.60" r="1.8" fill="#fff" stroke="#E5A39C" stroke-width="1.1"/><circle cx="764.15" cy="631.60" r="1.8" fill="#fff" stroke="#E5A39C" stroke-width="1.1"/><circle cx="777.02" cy="631.60" r="1.8" fill="#fff" stroke="#E5A39C" stroke-width="1.1"/><circle cx="789.90" cy="631.60" r="1.8" fill="#fff" stroke="#E5A39C" stroke-width="1.1"/><circle cx="802.77" cy="631.60" r="1.8" fill="#fff" stroke="#E5A39C" stroke-width="1.1"/><circle cx="815.65" cy="631.60" r="1.8" fill="#fff" stroke="#E5A39C" stroke-width="1.1"/><circle cx="828.52" cy="631.60" r="1.8" fill="#fff" stroke="#E5A39C" stroke-width="1.1"/><circle cx="841.40" cy="631.60" r="1.8" fill="#fff" stroke="#E5A39C" stroke-width="1.1"/><circle cx="854.27" cy="631.60" r="1.8" fill="#fff" stroke="#E5A39C" stroke-width="1.1"/><circle cx="867.15" cy="631.60" r="1.8" fill="#fff" stroke="#E5A39C" stroke-width="1.1"/><circle cx="880.02" cy="631.60" r="1.8" fill="#fff" stroke="#E5A39C" stroke-width="1.1"/><rect x="145.5" y="302.3" width="1.6" height="330" fill="#174A2E"/><path d="M134.10000000000002 649.8000000000001 L156.10000000000002 649.8000000000001 M134.50000000000003 649.8000000000001 C136.50000000000003 648.4000000000001 136.90000000000003 646.7 137.10000000000002 643.2 C137.3 636.2 139.60000000000002 633.4000000000001 143.50000000000003 632.4000000000001 Q145.10000000000002 631.4000000000001 146.70000000000002 632.4000000000001 C150.60000000000002 633.4000000000001 152.90000000000003 636.2 153.10000000000002 643.2 C153.3 646.7 153.70000000000002 648.4000000000001 155.70000000000002 649.8000000000001" fill="none" stroke="#174A2E" stroke-width="1.7" stroke-linejoin="round"/><path d="M141.8 652.2 L148.40000000000003 652.2 Q147.10000000000002 654.8000000000001 145.10000000000002 654.8000000000001 Q143.10000000000002 654.8000000000001 141.8 652.2 Z" fill="#174A2E"/><rect x="222.79999999999998" y="302.3" width="1.6" height="330" fill="#174A2E"/><path d="M211.4 649.8000000000001 L233.4 649.8000000000001 M211.8 649.8000000000001 C213.8 648.4000000000001 214.20000000000002 646.7 214.4 643.2 C214.6 636.2 216.9 633.4000000000001 220.8 632.4000000000001 Q222.4 631.4000000000001 224.0 632.4000000000001 C227.9 633.4000000000001 230.20000000000002 636.2 230.4 643.2 C230.6 646.7 231.0 648.4000000000001 233.0 649.8000000000001" fill="none" stroke="#174A2E" stroke-width="1.7" stroke-linejoin="round"/><path d="M219.1 652.2 L225.70000000000002 652.2 Q224.4 654.8000000000001 222.4 654.8000000000001 Q220.4 654.8000000000001 219.1 652.2 Z" fill="#174A2E"/><rect x="235.7" y="302.3" width="1.6" height="330" fill="#174A2E"/><path d="M224.3 649.8000000000001 L246.3 649.8000000000001 M224.70000000000002 649.8000000000001 C226.70000000000002 648.4000000000001 227.10000000000002 646.7 227.3 643.2 C227.5 636.2 229.8 633.4000000000001 233.70000000000002 632.4000000000001 Q235.3 631.4000000000001 236.9 632.4000000000001 C240.8 633.4000000000001 243.10000000000002 636.2 243.3 643.2 C243.5 646.7 243.9 648.4000000000001 245.9 649.8000000000001" fill="none" stroke="#174A2E" stroke-width="1.7" stroke-linejoin="round"/><path d="M232.0 652.2 L238.60000000000002 652.2 Q237.3 654.8000000000001 235.3 654.8000000000001 Q233.3 654.8000000000001 232.0 652.2 Z" fill="#174A2E"/><circle cx="62.1" cy="747.4" r="6" fill="#E77BD3"/><circle cx="62.1" cy="786.3" r="6" fill="#3BE0DF"/><circle cx="528.2" cy="747.4" r="6" fill="#ADE97F"/><circle cx="528.2" cy="786.3" r="6" fill="#E6ADA7"/><path d="M1086.51 680.52 A296.5 296.5 0 1 1 1650.49 680.52 L1607.79 666.65 A251.6 251.6 0 1 0 1129.21 666.65 Z" fill="#970024"/><path d="M1128.74 666.80 A252.1 252.1 0 0 1 1118.02 617.44 L1122.49 616.93 A247.6 247.6 0 0 0 1133.02 665.41 Z" fill="#12602F"/><path d="M1118.02 617.44 A252.1 252.1 0 0 1 1116.41 591.54 L1119.91 591.50 A248.6 248.6 0 0 0 1121.50 617.04 Z" fill="#FEFDB8"/><path d="M1116.41 591.54 A252.1 252.1 0 0 1 1117.56 564.74 L1120.55 565.02 A249.1 249.1 0 0 0 1119.41 591.51 Z" fill="#970024"/><line x1="1143.58" y1="661.98" x2="1131.69" y2="665.85" stroke="#12602F" stroke-width="2.9"/><line x1="1132.47" y1="574.05" x2="1119.99" y2="573.27" stroke="#970024" stroke-width="2.9"/><line x1="1154.51" y1="488.20" x2="1143.20" y2="482.88" stroke="#970024" stroke-width="2.9"/><line x1="1206.60" y1="416.50" x2="1198.05" y2="407.39" stroke="#970024" stroke-width="2.9"/><line x1="1281.44" y1="369.01" x2="1276.84" y2="357.39" stroke="#970024" stroke-width="2.9"/><line x1="1368.50" y1="352.40" x2="1368.50" y2="339.90" stroke="#970024" stroke-width="2.9"/><line x1="1455.56" y1="369.01" x2="1460.16" y2="357.39" stroke="#970024" stroke-width="2.9"/><line x1="1530.40" y1="416.50" x2="1538.95" y2="407.39" stroke="#970024" stroke-width="2.9"/><line x1="1582.49" y1="488.20" x2="1593.80" y2="482.88" stroke="#970024" stroke-width="2.9"/><line x1="1604.53" y1="574.05" x2="1617.01" y2="573.27" stroke="#970024" stroke-width="2.9"/><line x1="1593.42" y1="661.98" x2="1605.31" y2="665.85" stroke="#970024" stroke-width="2.9"/><circle cx="1750" cy="286" r="8.9" fill="#115C2F"/><circle cx="1750" cy="322" r="8.9" fill="#FDFDB7"/><circle cx="1750" cy="357.9" r="8.9" fill="#970024"/><circle cx="35.9" cy="916" r="8.9" fill="#5E2CA8"/><circle cx="211.8" cy="916" r="8.9" fill="#B03EB3"/><circle cx="413.8" cy="916" r="8.9" fill="#8F2A2E"/><circle cx="571.8" cy="916" r="8.9" fill="#D69556"/><circle cx="754.8" cy="916" r="8.9" fill="#5BB8D3"/><circle cx="35.9" cy="951.9" r="8.9" fill="#3B43B5"/><rect x="91.6" y="985" width="6.4" height="394.5" fill="#E6E6E6"/><rect x="90.6" y="985" width="1.2" height="395" fill="#C9C9C9"/><rect x="82" y="1378.80" width="9" height="1.4" fill="#D3D3D3"/><rect x="82" y="1313.00" width="9" height="1.4" fill="#D3D3D3"/><rect x="82" y="1247.20" width="9" height="1.4" fill="#D3D3D3"/><rect x="82" y="1181.40" width="9" height="1.4" fill="#D3D3D3"/><rect x="82" y="1115.60" width="9" height="1.4" fill="#D3D3D3"/><rect x="82" y="1049.80" width="9" height="1.4" fill="#D3D3D3"/><rect x="82" y="984.00" width="9" height="1.4" fill="#D3D3D3"/><rect x="82" y="1378.9" width="884.5" height="2" fill="#D3D3D3"/><rect x="90.30" y="1380" width="1.4" height="8.7" fill="#D3D3D3"/><rect x="278.10" y="1380" width="1.4" height="8.7" fill="#D3D3D3"/><rect x="480.80" y="1380" width="1.4" height="8.7" fill="#D3D3D3"/><rect x="683.50" y="1380" width="1.4" height="8.7" fill="#D3D3D3"/><rect x="886.20" y="1380" width="1.4" height="8.7" fill="#D3D3D3"/><rect x="964.80" y="1380" width="1.4" height="8.7" fill="#D3D3D3"/><path d="M91.00 1324.23 L105.48 1282.25 L119.96 1294.88 L134.44 1282.25 L148.92 1289.49 L163.40 1269.22 L177.88 1264.09 L192.36 1284.22 L206.84 1282.25 L221.32 1266.72 L235.80 1279.35 L250.28 1279.35 L264.76 1336.86 L264.76 1379.50 L250.28 1379.50 L235.80 1379.50 L221.32 1379.50 L206.84 1379.50 L192.36 1379.50 L177.88 1379.50 L163.40 1379.50 L148.92 1379.50 L134.44 1379.50 L119.96 1379.50 L105.48 1379.50 L91.00 1379.50Z" fill="#5E2CA8" fill-opacity="0.8"/><path d="M91.00 1324.23 L105.48 1282.25 L119.96 1294.88 L134.44 1282.25 L148.92 1289.49 L163.40 1269.22 L177.88 1264.09 L192.36 1284.22 L206.84 1282.25 L221.32 1266.72 L235.80 1279.35 L250.28 1279.35 L264.76 1336.86" fill="none" stroke="#5E2CA8" stroke-width="1.5" stroke-linejoin="round"/><path d="M91.00 1273.56 L105.48 1194.47 L119.96 1208.16 L134.44 1200.39 L148.92 1196.44 L163.40 1167.23 L177.88 1169.20 L192.36 1195.13 L206.84 1201.45 L221.32 1172.10 L235.80 1198.42 L250.28 1227.77 L264.76 1296.86 L264.76 1336.86 L250.28 1279.35 L235.80 1279.35 L221.32 1266.72 L206.84 1282.25 L192.36 1284.22 L177.88 1264.09 L163.40 1269.22 L148.92 1289.49 L134.44 1282.25 L119.96 1294.88 L105.48 1282.25 L91.00 1324.23Z" fill="#B03EB3" fill-opacity="0.8"/><path d="M91.00 1273.56 L105.48 1194.47 L119.96 1208.16 L134.44 1200.39 L148.92 1196.44 L163.40 1167.23 L177.88 1169.20 L192.36 1195.13 L206.84 1201.45 L221.32 1172.10 L235.80 1198.42 L250.28 1227.77 L264.76 1296.86 M264.76 1336.86 L250.28 1279.35 L235.80 1279.35 L221.32 1266.72 L206.84 1282.25 L192.36 1284.22 L177.88 1264.09 L163.40 1269.22 L148.92 1289.49 L134.44 1282.25 L119.96 1294.88 L105.48 1282.25 L91.00 1324.23" fill="none" stroke="#B03EB3" stroke-width="1.5" stroke-linejoin="round"/><path d="M91.00 1239.35 L105.48 1160.39 L119.96 1148.67 L134.44 1145.78 L148.92 1146.83 L163.40 1116.56 L177.88 1114.59 L192.36 1139.99 L206.84 1143.94 L221.32 1109.72 L235.80 1143.94 L250.28 1166.31 L264.76 1271.59 L264.76 1296.86 L250.28 1227.77 L235.80 1198.42 L221.32 1172.10 L206.84 1201.45 L192.36 1195.13 L177.88 1169.20 L163.40 1167.23 L148.92 1196.44 L134.44 1200.39 L119.96 1208.16 L105.48 1194.47 L91.00 1273.56Z" fill="#8F2A2E" fill-opacity="0.8"/><path d="M91.00 1239.35 L105.48 1160.39 L119.96 1148.67 L134.44 1145.78 L148.92 1146.83 L163.40 1116.56 L177.88 1114.59 L192.36 1139.99 L206.84 1143.94 L221.32 1109.72 L235.80 1143.94 L250.28 1166.31 L264.76 1271.59 M264.76 1296.86 L250.28 1227.77 L235.80 1198.42 L221.32 1172.10 L206.84 1201.45 L192.36 1195.13 L177.88 1169.20 L163.40 1167.23 L148.92 1196.44 L134.44 1200.39 L119.96 1208.16 L105.48 1194.47 L91.00 1273.56" fill="none" stroke="#8F2A2E" stroke-width="1.5" stroke-linejoin="round"/><path d="M91.00 1211.05 L105.48 1113.67 L119.96 1051.16 L134.44 1090.64 L148.92 1095.24 L163.40 1062.74 L177.88 1045.76 L192.36 1093.01 L206.84 1099.85 L221.32 1053.53 L235.80 1083.66 L250.28 1101.43 L264.76 1249.87 L264.76 1271.59 L250.28 1166.31 L235.80 1143.94 L221.32 1109.72 L206.84 1143.94 L192.36 1139.99 L177.88 1114.59 L163.40 1116.56 L148.92 1146.83 L134.44 1145.78 L119.96 1148.67 L105.48 1160.39 L91.00 1239.35Z" fill="#D69556" fill-opacity="0.8"/><path d="M91.00 1211.05 L105.48 1113.67 L119.96 1051.16 L134.44 1090.64 L148.92 1095.24 L163.40 1062.74 L177.88 1045.76 L192.36 1093.01 L206.84 1099.85 L221.32 1053.53 L235.80 1083.66 L250.28 1101.43 L264.76 1249.87 M264.76 1271.59 L250.28 1166.31 L235.80 1143.94 L221.32 1109.72 L206.84 1143.94 L192.36 1139.99 L177.88 1114.59 L163.40 1116.56 L148.92 1146.83 L134.44 1145.78 L119.96 1148.67 L105.48 1160.39 L91.00 1239.35" fill="none" stroke="#D69556" stroke-width="1.5" stroke-linejoin="round"/><path d="M91.00 1186.05 L105.48 1109.72 L119.96 1049.18 L134.44 1055.76 L148.92 1093.93 L163.40 1017.86 L177.88 1042.60 L192.36 1092.61 L206.84 1099.85 L221.32 1050.50 L235.80 1083.66 L250.28 1054.45 L264.76 1247.90 L264.76 1249.87 L250.28 1101.43 L235.80 1083.66 L221.32 1053.53 L206.84 1099.85 L192.36 1093.01 L177.88 1045.76 L163.40 1062.74 L148.92 1095.24 L134.44 1090.64 L119.96 1051.16 L105.48 1113.67 L91.00 1211.05Z" fill="#5BB8D3" fill-opacity="0.8"/><path d="M91.00 1186.05 L105.48 1109.72 L119.96 1049.18 L134.44 1055.76 L148.92 1093.93 L163.40 1017.86 L177.88 1042.60 L192.36 1092.61 L206.84 1099.85 L221.32 1050.50 L235.80 1083.66 L250.28 1054.45 L264.76 1247.90 M264.76 1249.87 L250.28 1101.43 L235.80 1083.66 L221.32 1053.53 L206.84 1099.85 L192.36 1093.01 L177.88 1045.76 L163.40 1062.74 L148.92 1095.24 L134.44 1090.64 L119.96 1051.16 L105.48 1113.67 L91.00 1211.05" fill="none" stroke="#5BB8D3" stroke-width="1.5" stroke-linejoin="round"/><path d="M91.00 1180.78 L105.48 1078.14 L119.96 1008.39 L134.44 1054.97 L148.92 1054.45 L163.40 1015.63 L177.88 1000.49 L192.36 1042.60 L206.84 1051.82 L221.32 995.23 L235.80 1053.13 L250.28 1053.13 L264.76 1246.58 L264.76 1247.90 L250.28 1054.45 L235.80 1083.66 L221.32 1050.50 L206.84 1099.85 L192.36 1092.61 L177.88 1042.60 L163.40 1017.86 L148.92 1093.93 L134.44 1055.76 L119.96 1049.18 L105.48 1109.72 L91.00 1186.05Z" fill="#3B43B5" fill-opacity="0.8"/><path d="M91.00 1180.78 L105.48 1078.14 L119.96 1008.39 L134.44 1054.97 L148.92 1054.45 L163.40 1015.63 L177.88 1000.49 L192.36 1042.60 L206.84 1051.82 L221.32 995.23 L235.80 1053.13 L250.28 1053.13 L264.76 1246.58 M264.76 1247.90 L250.28 1054.45 L235.80 1083.66 L221.32 1050.50 L206.84 1099.85 L192.36 1092.61 L177.88 1042.60 L163.40 1017.86 L148.92 1093.93 L134.44 1055.76 L119.96 1049.18 L105.48 1109.72 L91.00 1186.05" fill="none" stroke="#3B43B5" stroke-width="1.5" stroke-linejoin="round"/>
</svg>
<div class="tx">
<div style="left:183.27px;top:18.93px;font-size:22.17px;line-height:22.17px;color:#69707D;letter-spacing:0.013px;">Dashboard</div>
<div style="left:351.37px;top:18.93px;font-size:22.17px;line-height:22.17px;color:#343741;letter-spacing:0.009px;">Editing New Dashboard (unsaved)</div>
<div style="left:1020.46px;top:18.93px;font-size:22.17px;line-height:22.17px;color:#1A56A6;letter-spacing:0.102px;">Options</div>
<div style="left:1135.01px;top:18.93px;font-size:22.17px;line-height:22.17px;color:#1A56A6;letter-spacing:-0.320px;">Share</div>
<div style="left:1230.90px;top:18.93px;font-size:22.17px;line-height:22.17px;color:#1A56A6;letter-spacing:-0.404px;">Add</div>
<div style="left:1307.86px;top:18.93px;font-size:22.17px;line-height:22.17px;color:#1A56A6;letter-spacing:0.096px;">Cancel</div>
<div style="left:1413.91px;top:18.93px;font-size:22.17px;line-height:22.17px;color:#1A56A6;letter-spacing:-0.650px;">Save</div>
<div style="left:1498.87px;top:18.93px;font-size:22.17px;line-height:22.17px;color:#1A56A6;letter-spacing:0.254px;">Reporting</div>
<div style="left:1676.69px;top:18.52px;font-size:23.60px;line-height:23.60px;color:#1A56A6;letter-spacing:0.793px;">Create new</div>
<div style="left:1867.32px;top:19.75px;font-size:22.50px;line-height:22.50px;color:#000000;-webkit-text-stroke:0.6px #000;">a</div>
<div style="left:96.22px;top:101.08px;font-size:21.88px;line-height:21.88px;color:#5A606C;letter-spacing:-0.225px;">Search</div>
<div style="left:1005.25px;top:97.98px;font-size:22.46px;line-height:22.46px;color:#1A56A6;letter-spacing:-1.737px;">DQL</div>
<div style="left:1166.53px;top:98.86px;font-size:22.61px;line-height:22.61px;color:#343741;letter-spacing:-0.066px;">Last 30 days</div>
<div style="left:1653.20px;top:98.91px;font-size:22.32px;line-height:22.32px;color:#1A56A6;letter-spacing:-0.170px;">Show dates</div>
<div style="left:1856.82px;top:96.23px;font-size:25.36px;line-height:25.36px;color:#1A56A6;letter-spacing:-0.367px;">Refresh</div>
<div style="left:71.64px;top:157.76px;font-size:22.61px;line-height:22.61px;color:#1A56A6;letter-spacing:-0.012px;">+ Add filter</div>
<div style="left:17.40px;top:228.38px;font-size:19.28px;line-height:19.28px;color:#1a1c21;font-weight:bold;letter-spacing:-0.438px;">[eCommerce] Promotion Tracking</div>
<div style="left:1005.90px;top:228.38px;font-size:19.28px;line-height:19.28px;color:#1a1c21;font-weight:bold;letter-spacing:-0.375px;">[eCommerce] Orders</div>
<div style="left:17.40px;top:858.38px;font-size:19.28px;line-height:19.28px;color:#1a1c21;font-weight:bold;letter-spacing:-0.471px;">[eCommerce] Sales by Category</div>
<div style="left:73.80px;top:625.29px;font-size:14.90px;line-height:14.90px;color:#666666;">$0</div>
<div style="left:57.22px;top:596.95px;font-size:14.90px;line-height:14.90px;color:#666666;">$100</div>
<div style="left:57.22px;top:568.62px;font-size:14.90px;line-height:14.90px;color:#666666;">$200</div>
<div style="left:57.22px;top:540.29px;font-size:14.90px;line-height:14.90px;color:#666666;">$300</div>
<div style="left:57.22px;top:511.96px;font-size:14.90px;line-height:14.90px;color:#666666;">$400</div>
<div style="left:57.22px;top:483.62px;font-size:14.90px;line-height:14.90px;color:#666666;">$500</div>
<div style="left:57.22px;top:455.29px;font-size:14.90px;line-height:14.90px;color:#666666;">$600</div>
<div style="left:57.22px;top:426.96px;font-size:14.90px;line-height:14.90px;color:#666666;">$700</div>
<div style="left:57.22px;top:398.62px;font-size:14.90px;line-height:14.90px;color:#666666;">$800</div>
<div style="left:57.22px;top:370.29px;font-size:14.90px;line-height:14.90px;color:#666666;">$900</div>
<div style="left:44.80px;top:341.96px;font-size:14.90px;line-height:14.90px;color:#666666;">$1,000</div>
<div style="left:44.80px;top:313.62px;font-size:14.90px;line-height:14.90px;color:#666666;">$1,100</div>
<div style="left:75.09px;top:661.43px;font-size:15.20px;line-height:15.20px;color:#666666;letter-spacing:-0.288px;">2023-01-23 00:00</div>
<div style="left:229.99px;top:661.43px;font-size:15.20px;line-height:15.20px;color:#666666;letter-spacing:-0.288px;">2023-01-29 00:00</div>
<div style="left:358.74px;top:661.43px;font-size:15.20px;line-height:15.20px;color:#666666;letter-spacing:-0.288px;">2023-02-03 00:00</div>
<div style="left:513.24px;top:661.43px;font-size:15.20px;line-height:15.20px;color:#666666;letter-spacing:-0.288px;">2023-02-09 00:00</div>
<div style="left:667.74px;top:661.43px;font-size:15.20px;line-height:15.20px;color:#666666;letter-spacing:-0.288px;">2023-02-15 00:00</div>
<div style="left:822.24px;top:661.43px;font-size:15.20px;line-height:15.20px;color:#666666;letter-spacing:-0.288px;">2023-02-21 00:00</div>
<div style="left:447.85px;top:689.12px;font-size:18.41px;line-height:18.41px;color:#2a2a2a;font-weight:bold;letter-spacing:-0.398px;">per 12 hours</div>
<div style="left:79.25px;top:739.16px;font-size:18.60px;line-height:18.60px;color:#343741;letter-spacing:-0.019px;">Revenue Trousers</div>
<div style="left:453.47px;top:739.16px;font-size:18.60px;line-height:18.60px;color:#343741;">$0</div>
<div style="left:79.25px;top:778.06px;font-size:18.60px;line-height:18.60px;color:#343741;letter-spacing:-0.162px;">Revenue Bags</div>
<div style="left:453.47px;top:778.06px;font-size:18.60px;line-height:18.60px;color:#343741;">$0</div>
<div style="left:545.35px;top:739.16px;font-size:18.60px;line-height:18.60px;color:#343741;letter-spacing:0.010px;">Revenue Watches</div>
<div style="left:920.27px;top:739.16px;font-size:18.60px;line-height:18.60px;color:#343741;">$0</div>
<div style="left:545.35px;top:778.06px;font-size:18.60px;line-height:18.60px;color:#343741;letter-spacing:0.016px;">Revenue Cocktail Dresses</div>
<div style="left:920.27px;top:778.06px;font-size:18.60px;line-height:18.60px;color:#343741;">$0</div>
<div style="left:1334.25px;top:532.64px;font-size:24.64px;line-height:24.64px;color:#5F6571;letter-spacing:0.457px;">Count</div>
<div style="left:1328.40px;top:557.19px;font-size:51.16px;line-height:51.16px;color:#5F6571;letter-spacing:-2.743px;">919</div>
<div style="left:1334.27px;top:767.01px;font-size:24.20px;line-height:24.20px;color:#343741;letter-spacing:0.542px;">Count</div>
<div style="left:1768.19px;top:277.24px;font-size:19.57px;line-height:19.57px;color:#343741;letter-spacing:0.154px;">0 - 50</div>
<div style="left:1768.19px;top:313.24px;font-size:19.57px;line-height:19.57px;color:#343741;letter-spacing:-0.051px;">50 - 75</div>
<div style="left:1767.88px;top:349.14px;font-size:19.57px;line-height:19.57px;color:#343741;letter-spacing:-0.456px;">75 - 100</div>
<div style="left:52.73px;top:906.85px;font-size:20.14px;line-height:20.14px;color:#343741;letter-spacing:-0.362px;">Men's Clothing</div>
<div style="left:230.50px;top:906.85px;font-size:20.14px;line-height:20.14px;color:#343741;letter-spacing:-0.709px;">Women's Clothing</div>
<div style="left:431.23px;top:906.85px;font-size:20.14px;line-height:20.14px;color:#343741;letter-spacing:-0.752px;">Men's Shoes</div>
<div style="left:590.00px;top:906.85px;font-size:20.14px;line-height:20.14px;color:#343741;letter-spacing:-1.029px;">Women's Shoes</div>
<div style="left:772.13px;top:906.85px;font-size:20.14px;line-height:20.14px;color:#343741;letter-spacing:-0.518px;">Men's Accessories</div>
<div style="left:54.30px;top:942.75px;font-size:20.14px;line-height:20.14px;color:#343741;letter-spacing:-0.773px;">Women's Accessories</div>
<div style="left:67.47px;top:1372.01px;font-size:17.00px;line-height:17.00px;color:#535966;">0</div>
<div style="left:58.01px;top:1306.21px;font-size:17.00px;line-height:17.00px;color:#535966;">50</div>
<div style="left:48.56px;top:1240.41px;font-size:17.00px;line-height:17.00px;color:#535966;">100</div>
<div style="left:48.56px;top:1174.61px;font-size:17.00px;line-height:17.00px;color:#535966;">150</div>
<div style="left:48.56px;top:1108.81px;font-size:17.00px;line-height:17.00px;color:#535966;">200</div>
<div style="left:48.56px;top:1043.01px;font-size:17.00px;line-height:17.00px;color:#535966;">250</div>
<div style="left:48.56px;top:977.21px;font-size:17.00px;line-height:17.00px;color:#535966;">300</div>
<div style="left:208.78px;top:1391.16px;font-size:17.54px;line-height:17.54px;color:#535966;letter-spacing:0.080px;">2023-01-29 00:00</div>
<div style="left:411.48px;top:1391.16px;font-size:17.54px;line-height:17.54px;color:#535966;letter-spacing:0.080px;">2023-02-05 00:00</div>
<div style="left:614.18px;top:1391.16px;font-size:17.54px;line-height:17.54px;color:#535966;letter-spacing:0.080px;">2023-02-12 00:00</div>
<div style="left:816.88px;top:1391.16px;font-size:17.54px;line-height:17.54px;color:#535966;letter-spacing:0.080px;">2023-02-19 00:00</div>
<div style="left:423.54px;top:1417.56px;font-size:18.00px;line-height:18.00px;color:#535966;font-weight:bold;letter-spacing:0.187px;">order_date per 12 hours</div>
</div>
</body></html>
